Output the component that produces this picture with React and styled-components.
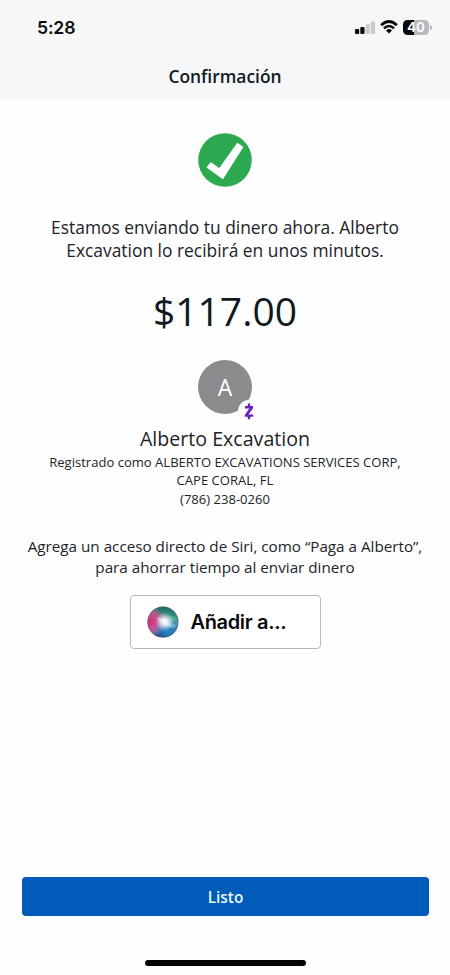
import React from "react";
import styled, { createGlobalStyle } from "styled-components";

const GlobalStyle = createGlobalStyle`
  * { box-sizing: border-box; }
  body { margin: 0; background: #fefefe; }
`;

const Screen = styled.div`
  display: flex;
  flex-direction: column;
  width: 450px;
  height: 975px;
  overflow: hidden;
  background: #fefefe;
  color: #1d2328;
  font-family: "Open Sans", "Noto Sans", sans-serif;
`;

const Header = styled.header`
  height: 100px;
  background: #f5f7f9;
`;

const StatusBar = styled.div`
  display: flex;
  align-items: center;
  justify-content: space-between;
  height: 54px;
  padding: 0 18px 0 37px;
`;

const Clock = styled.span`
  margin-top: 1px;
  font: 600 17.6px/24px Inter, sans-serif;
  letter-spacing: -0.15px;
  color: #0b0d10;
`;

const StatusIcons = styled.div`
  display: flex;
  align-items: center;
  gap: 5px;
`;

const Title = styled.h1`
  margin: 9px 0 0;
  text-align: center;
  font-size: 17.4px;
  font-weight: 600;
  line-height: 26px;
  color: #14191e;
`;

const Content = styled.main`
  display: flex;
  flex: 1;
  flex-direction: column;
  align-items: center;
  padding-top: 33px;
  text-align: center;
`;

const Text = styled.p`
  margin: ${(p) => p.$top || 0}px 0 0;
  font-size: ${(p) => p.$size}px;
  line-height: ${(p) => p.$line}px;
  white-space: nowrap;
`;

const Amount = styled(Text)`
  color: #10191e;
`;

const Avatar = styled.div`
  position: relative;
  display: flex;
  align-items: center;
  justify-content: center;
  width: 54px;
  height: 54px;
  margin-top: 23px;
  border-radius: 50%;
  background: #8a8b8d;
  color: #fff;
  font-size: 23px;
  line-height: 54px;
`;

const ZelleBadge = styled.span`
  position: absolute;
  left: 40px;
  top: 40px;
  display: flex;
  align-items: center;
  justify-content: center;
  width: 22px;
  height: 22px;
  border-radius: 50%;
  background: #fefefe;
`;

const SiriButton = styled.button`
  display: flex;
  align-items: center;
  gap: 12px;
  width: 191px;
  height: 54px;
  margin: 18px 0 0;
  padding: 0 0 0 16px;
  border: 1px solid #b9b9ba;
  border-radius: 4px;
  background: #fff;
  color: #08090a;
  font: 600 20px/26px Inter, sans-serif;
  letter-spacing: -0.35px;
`;

const Footer = styled.footer`
  display: flex;
  flex-direction: column;
  align-items: center;
  height: 98px;
  padding: 0 21px 0 22px;
`;

const DoneButton = styled.button`
  width: 407px;
  height: 39px;
  padding: 2px 0 0;
  border: 0;
  border-radius: 4px;
  background: #005cb8;
  color: #e9f4fd;
  font: 600 15.4px/37px "Open Sans", sans-serif;
`;

const HomeIndicator = styled.div`
  width: 161px;
  height: 6px;
  margin-top: 44px;
  border-radius: 3px;
  background: #000;
`;

const Signal = () => (
  <svg width="20" height="13" viewBox="0 0 20 13">
    <rect x="0" y="8" width="4.2" height="5" rx="1" fill="#08090a" />
    <rect x="5.3" y="6" width="4.2" height="7" rx="1" fill="#08090a" />
    <rect x="10.6" y="3.2" width="4.2" height="9.8" rx="1" fill="#c9cbcd" />
    <rect x="15.8" y="0.5" width="4.2" height="12.5" rx="1" fill="#c9cbcd" />
  </svg>
);

const Wifi = () => (
  <svg width="18" height="14" viewBox="0 0 18 14" fill="none" stroke="#08090a">
    <path d="M1.2 5.2Q9-2.2 16.8 5.2" strokeWidth="2.7" />
    <path d="M4 8.3Q9 3.6 14 8.3" strokeWidth="2.5" />
    <path d="M6 10.4Q9 7.8 12 10.4L9 13.4Z" fill="#08090a" stroke="none" />
  </svg>
);

const BatteryShell = styled.div`
  display: flex;
  align-items: center;
  gap: 1px;
`;

const BatteryLevel = styled.div`
  width: 26px;
  height: 15px;
  border-radius: 4.5px;
  background: linear-gradient(90deg, #08090a 41%, #b7b9bb 41%);
  color: #fff;
  text-align: center;
  font: 600 13.5px/15px Inter, sans-serif;
`;

const BatteryTip = styled.div`
  width: 2px;
  height: 5px;
  border-radius: 0 2px 2px 0;
  background: #b7b9bb;
`;

const Check = () => (
  <svg width="54" height="54" viewBox="0 0 54 54">
    <circle cx="27" cy="27" r="26.8" fill="#2da952" />
    <path
      d="M9.4 34.2L12.9 30.2L21.4 36.2L39.6 10.8L44.4 14.1L24.6 45.2Z"
      fill="#fff"
      stroke="#fff"
      strokeWidth="1.6"
      strokeLinejoin="round"
    />
  </svg>
);

const Zelle = () => (
  <svg width="12" height="17" viewBox="0 0 12 17" fill="none" stroke="#661fc0">
    <path d="M2 4.2H10M1.8 12.6H10.2" strokeWidth="2.4" />
    <path d="M8.7 4.6L3.2 12.2" strokeWidth="2.8" />
    <path d="M6 .5V4M6 13V16.3" strokeWidth="2.4" />
  </svg>
);

const Siri = () => (
  <svg width="32" height="32" viewBox="0 0 32 32">
    <defs>
      <linearGradient id="base" x1="0" y1="0" x2="0" y2="1">
        <stop offset="0" stopColor="#206b62" />
        <stop offset=".35" stopColor="#389384" />
        <stop offset=".6" stopColor="#4f97b8" />
        <stop offset="1" stopColor="#183f7d" />
      </linearGradient>
      <radialGradient id="pink" cx=".08" cy=".48" r=".5">
        <stop offset="0" stopColor="#d22d74" />
        <stop offset=".55" stopColor="#d0528f" stopOpacity=".9" />
        <stop offset="1" stopColor="#cf78ad" stopOpacity="0" />
      </radialGradient>
      <radialGradient id="blue" cx=".66" cy=".8" r=".35">
        <stop offset="0" stopColor="#2588ce" />
        <stop offset="1" stopColor="#2588ce" stopOpacity="0" />
      </radialGradient>
      <radialGradient id="glow" cx=".56" cy=".49" r=".3">
        <stop offset="0" stopColor="#fff" />
        <stop offset=".4" stopColor="#f8f3fa" stopOpacity=".8" />
        <stop offset="1" stopColor="#d6e9ee" stopOpacity="0" />
      </radialGradient>
    </defs>
    <circle cx="16" cy="16" r="15.5" fill="url(#base)" />
    <circle cx="16" cy="16" r="15.5" fill="url(#pink)" />
    <circle cx="16" cy="16" r="15.5" fill="url(#blue)" />
    <path d="M6 7Q16 5 21 15Q12 13 6 7Z" fill="#a66272" opacity=".5" />
    <path d="M5 24Q12 14 20 16Q16 26 5 24Z" fill="#8572b8" opacity=".4" />
    <path d="M17 15Q26 6 30 13Q27 18 17 15Z" fill="#62c4a5" opacity=".45" />
    <path d="M17 17Q26 16 29 20Q24 25 17 17Z" fill="#8bd1e8" opacity=".5" />
    <circle cx="16" cy="16" r="15.5" fill="url(#glow)" />
    <path d="M9 11L20 14L23 20L16 18Z" fill="#fff" opacity=".4" />
    <circle cx="16" cy="16" r="15" fill="none" stroke="#5c5878" strokeOpacity=".5" />
  </svg>
);

export default function App() {
  return (
    <Screen>
      <GlobalStyle />
      <Header>
        <StatusBar>
          <Clock>5:28</Clock>
          <StatusIcons>
            <Signal />
            <Wifi />
            <BatteryShell>
              <BatteryLevel>40</BatteryLevel>
              <BatteryTip />
            </BatteryShell>
          </StatusIcons>
        </StatusBar>
        <Title>Confirmación</Title>
      </Header>
      <Content>
        <Check />
        <Text $top={29} $size={17.4} $line={23}>
          Estamos enviando tu dinero ahora. Alberto
          <br />
          Excavation lo recibirá en unos minutos.
        </Text>
        <Amount $top={23} $size={39} $line={52}>$117.00</Amount>
        <Avatar>
          A
          <ZelleBadge>
            <Zelle />
          </ZelleBadge>
        </Avatar>
        <Text $top={12} $size={19.6} $line={26}>Alberto Excavation</Text>
        <Text $top={1} $size={13.05} $line={18}>
          Registrado como ALBERTO EXCAVATIONS SERVICES CORP,
          <br />
          CAPE CORAL, FL
        </Text>
        <Text $top={1} $size={13.05} $line={18}>(786) 238-0260</Text>
        <Text $top={28} $size={15.22} $line={20.5}>
          Agrega un acceso directo de Siri, como “Paga a Alberto”,
          <br />
          para ahorrar tiempo al enviar dinero
        </Text>
        <SiriButton>
          <Siri />
          Añadir a...
        </SiriButton>
      </Content>
      <Footer>
        <DoneButton>Listo</DoneButton>
        <HomeIndicator />
      </Footer>
    </Screen>
  );
}
